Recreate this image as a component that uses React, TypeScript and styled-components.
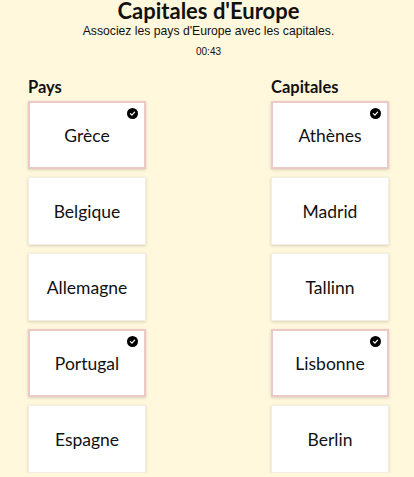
import React from "react";
import styled, { createGlobalStyle } from "styled-components";

const Global = createGlobalStyle`
  html, body { margin: 0; padding: 0; background: #fff8dc; }
  body { font-family: "Lato", "Liberation Sans", sans-serif; color: #111; }
`;

const Page = styled.div`
  display: flex;
  flex-direction: column;
  align-items: center;
  padding: 0 25px 0 28px;
`;

const Title = styled.h1`
  margin: 0;
  font-family: "Lato", sans-serif;
  font-weight: 700;
  font-size: 22px;
  line-height: 20px;
  padding-top: 1px;
  color: #111;
`;

const Subtitle = styled.p`
  margin: 3px 0 0;
  font-family: "Liberation Sans", Arial, sans-serif;
  font-size: 12.2px;
  line-height: 14px;
`;

const Timer = styled.div`
  margin-top: 8px;
  font-family: "Liberation Sans", Arial, sans-serif;
  font-size: 10px;
  line-height: 12px;
`;

const Columns = styled.div`
  align-self: stretch;
  display: flex;
  justify-content: space-between;
  margin-top: 20px;
`;

const Column = styled.div`
  display: flex;
  flex-direction: column;
  width: 118px;
`;

const Heading = styled.h2`
  margin: 0 0 5px;
  font-family: "Lato", sans-serif;
  font-weight: 700;
  font-size: 16.5px;
  line-height: 18px;
`;

const List = styled.div`
  display: flex;
  flex-direction: column;
  gap: 8px;
`;

const Card = styled.div<{ $matched?: boolean }>`
  position: relative;
  height: 68px;
  box-sizing: border-box;
  background: #fff;
  display: flex;
  align-items: center;
  justify-content: center;
  font-family: "Lato", sans-serif;
  font-size: 17.5px;
  color: #111;
  border: ${(p) => (p.$matched ? "2px solid #ecc9c9" : "1px solid #f3eee4")};
  box-shadow: 0 1px 3px rgba(0, 0, 0, 0.16);
`;

const Badge = styled.span`
  position: absolute;
  top: 5px;
  right: 6px;
  width: 11px;
  height: 11px;
  border-radius: 50%;
  background: #000;
  display: flex;
  align-items: center;
  justify-content: center;
`;

const Check = () => (
  <Badge>
    <svg width="7" height="7" viewBox="0 0 10 10">
      <path d="M2 5.2 L4.2 7.3 L8 3" fill="none" stroke="#fff" strokeWidth="1.8" strokeLinecap="round" strokeLinejoin="round" />
    </svg>
  </Badge>
);

const countries = [
  { name: "Grèce", matched: true },
  { name: "Belgique" },
  { name: "Allemagne" },
  { name: "Portugal", matched: true },
  { name: "Espagne" },
];

const capitals = [
  { name: "Athènes", matched: true },
  { name: "Madrid" },
  { name: "Tallinn" },
  { name: "Lisbonne", matched: true },
  { name: "Berlin" },
];

export default function App() {
  return (
    <>
      <Global />
      <Page>
        <Title>Capitales d'Europe</Title>
        <Subtitle>Associez les pays d'Europe avec les capitales.</Subtitle>
        <Timer>00:43</Timer>
        <Columns>
          <Column>
            <Heading>Pays</Heading>
            <List>
              {countries.map((c) => (
                <Card key={c.name} $matched={c.matched}>
                  {c.name}
                  {c.matched && <Check />}
                </Card>
              ))}
            </List>
          </Column>
          <Column>
            <Heading>Capitales</Heading>
            <List>
              {capitals.map((c) => (
                <Card key={c.name} $matched={c.matched}>
                  {c.name}
                  {c.matched && <Check />}
                </Card>
              ))}
            </List>
          </Column>
        </Columns>
      </Page>
    </>
  );
}
